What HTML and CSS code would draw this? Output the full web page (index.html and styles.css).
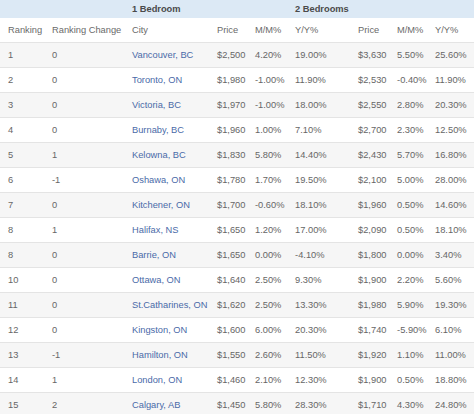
FILE: index.html
```html
<!DOCTYPE html>
<html lang="en">
<head>
  <meta charset="UTF-8">
  <title>Rent Rankings</title>
  <link rel="stylesheet" href="styles.css">
</head>
<body>
  <table class="rent-table">
    <colgroup>
      <col class="c-rank">
      <col class="c-change">
      <col class="c-city">
      <col class="c-price">
      <col class="c-mm">
      <col class="c-yy">
      <col class="c-price2">
      <col class="c-mm2">
      <col class="c-yy2">
    </colgroup>
    <thead>
      <tr class="group-row">
        <th colspan="2"></th>
        <th colspan="3">1 Bedroom</th>
        <th colspan="4">2 Bedrooms</th>
      </tr>
      <tr class="label-row">
        <th>Ranking</th>
        <th>Ranking Change</th>
        <th>City</th>
        <th>Price</th>
        <th>M/M%</th>
        <th>Y/Y%</th>
        <th>Price</th>
        <th>M/M%</th>
        <th>Y/Y%</th>
      </tr>
    </thead>
    <tbody>
      <tr><td>1</td><td>0</td><td><a href="#">Vancouver, BC</a></td><td>$2,500</td><td>4.20%</td><td>19.00%</td><td>$3,630</td><td>5.50%</td><td>25.60%</td></tr>
      <tr><td>2</td><td>0</td><td><a href="#">Toronto, ON</a></td><td>$1,980</td><td>-1.00%</td><td>11.90%</td><td>$2,530</td><td>-0.40%</td><td>11.90%</td></tr>
      <tr><td>3</td><td>0</td><td><a href="#">Victoria, BC</a></td><td>$1,970</td><td>-1.00%</td><td>18.00%</td><td>$2,550</td><td>2.80%</td><td>20.30%</td></tr>
      <tr><td>4</td><td>0</td><td><a href="#">Burnaby, BC</a></td><td>$1,960</td><td>1.00%</td><td>7.10%</td><td>$2,700</td><td>2.30%</td><td>12.50%</td></tr>
      <tr><td>5</td><td>1</td><td><a href="#">Kelowna, BC</a></td><td>$1,830</td><td>5.80%</td><td>14.40%</td><td>$2,430</td><td>5.70%</td><td>16.80%</td></tr>
      <tr><td>6</td><td>-1</td><td><a href="#">Oshawa, ON</a></td><td>$1,780</td><td>1.70%</td><td>19.50%</td><td>$2,100</td><td>5.00%</td><td>28.00%</td></tr>
      <tr><td>7</td><td>0</td><td><a href="#">Kitchener, ON</a></td><td>$1,700</td><td>-0.60%</td><td>18.10%</td><td>$1,960</td><td>0.50%</td><td>14.60%</td></tr>
      <tr><td>8</td><td>1</td><td><a href="#">Halifax, NS</a></td><td>$1,650</td><td>1.20%</td><td>17.00%</td><td>$2,090</td><td>0.50%</td><td>18.10%</td></tr>
      <tr><td>8</td><td>0</td><td><a href="#">Barrie, ON</a></td><td>$1,650</td><td>0.00%</td><td>-4.10%</td><td>$1,800</td><td>0.00%</td><td>3.40%</td></tr>
      <tr><td>10</td><td>0</td><td><a href="#">Ottawa, ON</a></td><td>$1,640</td><td>2.50%</td><td>9.30%</td><td>$1,900</td><td>2.20%</td><td>5.60%</td></tr>
      <tr><td>11</td><td>0</td><td><a href="#">St.Catharines, ON</a></td><td>$1,620</td><td>2.50%</td><td>13.30%</td><td>$1,980</td><td>5.90%</td><td>19.30%</td></tr>
      <tr><td>12</td><td>0</td><td><a href="#">Kingston, ON</a></td><td>$1,600</td><td>6.00%</td><td>20.30%</td><td>$1,740</td><td>-5.90%</td><td>6.10%</td></tr>
      <tr><td>13</td><td>-1</td><td><a href="#">Hamilton, ON</a></td><td>$1,550</td><td>2.60%</td><td>11.50%</td><td>$1,920</td><td>1.10%</td><td>11.00%</td></tr>
      <tr><td>14</td><td>1</td><td><a href="#">London, ON</a></td><td>$1,460</td><td>2.10%</td><td>12.30%</td><td>$1,900</td><td>0.50%</td><td>18.80%</td></tr>
      <tr><td>15</td><td>2</td><td><a href="#">Calgary, AB</a></td><td>$1,450</td><td>5.80%</td><td>28.30%</td><td>$1,710</td><td>4.30%</td><td>24.80%</td></tr>
    </tbody>
  </table>
</body>
</html>
```
FILE: styles.css
```css
html, body {
  margin: 0;
  background: #fff;
  font-family: "Liberation Sans", Arial, sans-serif;
  color: #666;
  overflow: hidden;
}

.rent-table {
  border-collapse: collapse;
  table-layout: fixed;
  width: 474px;
  font-size: 9.3px;
}

.c-rank { width: 44px; }
.c-change { width: 80px; }
.c-city { width: 85px; }
.c-price { width: 38px; }
.c-mm { width: 40px; }
.c-yy { width: 63px; }
.c-price2 { width: 39px; }
.c-mm2 { width: 38px; }
.c-yy2 { width: 47px; }

.rent-table th,
.rent-table td {
  text-align: left;
  padding: 0 0 0 8px;
  white-space: nowrap;
  vertical-align: middle;
}

.group-row th {
  height: 17px;
  background: #dce9f5;
  color: #4a4a4a;
  font-weight: 700;
  padding-bottom: 1px;
}

.label-row th {
  height: 24px;
  font-weight: 400;
  color: #6a6a6a;
}

.rent-table tbody td {
  height: 24px;
  border-top: 1px solid #e4e4e4;
}

.rent-table tbody tr:nth-child(odd) {
  background: #f6f6f6;
}

.rent-table a {
  color: #4a6aa8;
  text-decoration: none;
}
```
